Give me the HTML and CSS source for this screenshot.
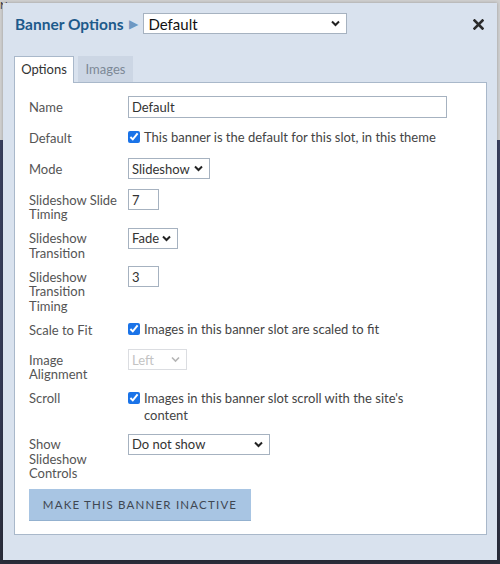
FILE: index.html
```html
<!DOCTYPE html>
<html>
<head>
<meta charset="utf-8">
<link rel="stylesheet" href="styles.css">
</head>
<body>
<div class="page">
  <div class="page-head"><span class="page-letter">N</span></div>
  <div class="page-body"></div>
</div>
<div class="dialog">
  <div class="dlg-head">
    <div class="dlg-title">
      <span class="title-text">Banner Options</span>
      <span class="title-arrow">&#9654;</span>
      <span class="sel-wrap">
        <select class="sel sel-title"><option>Default</option></select>
        <svg class="chev" width="9" height="7" viewBox="0 0 9 7"><path d="M1 1.5 L4.5 5 L8 1.5" fill="none" stroke="#222" stroke-width="2"/></svg>
      </span>
    </div>
    <svg class="close" width="11" height="11" viewBox="0 0 11 11"><path d="M1.5 1.5 L9.5 9.5 M9.5 1.5 L1.5 9.5" stroke="#2b2b2b" stroke-width="2.6" stroke-linecap="square"/></svg>
  </div>
  <div class="tabs">
    <div class="tab tab-active">Options</div>
    <div class="tab">Images</div>
  </div>
  <div class="panel">
    <div class="row">
      <div class="lbl">Name</div>
      <input class="txt txt-wide" type="text" value="Default">
    </div>
    <div class="row">
      <div class="lbl">Default</div>
      <label class="chk"><input type="checkbox" checked><span>This banner is the default for this slot, in this theme</span></label>
    </div>
    <div class="row">
      <div class="lbl">Mode</div>
      <span class="sel-wrap">
        <select class="sel sel-mode"><option>Slideshow</option></select>
        <svg class="chev" width="9" height="7" viewBox="0 0 9 7"><path d="M1 1.5 L4.5 5 L8 1.5" fill="none" stroke="#222" stroke-width="2"/></svg>
      </span>
    </div>
    <div class="row">
      <div class="lbl">Slideshow Slide Timing</div>
      <input class="txt txt-num" type="text" value="7">
    </div>
    <div class="row">
      <div class="lbl">Slideshow Transition</div>
      <span class="sel-wrap">
        <select class="sel sel-trans"><option>Fade</option></select>
        <svg class="chev" width="9" height="7" viewBox="0 0 9 7"><path d="M1 1.5 L4.5 5 L8 1.5" fill="none" stroke="#222" stroke-width="2"/></svg>
      </span>
    </div>
    <div class="row">
      <div class="lbl">Slideshow Transition Timing</div>
      <input class="txt txt-num" type="text" value="3">
    </div>
    <div class="row row-tight">
      <div class="lbl">Scale to Fit</div>
      <label class="chk"><input type="checkbox" checked><span>Images in this banner slot are scaled to fit</span></label>
    </div>
    <div class="row">
      <div class="lbl">Image Alignment</div>
      <span class="sel-wrap">
        <select class="sel sel-align" disabled><option>Left</option></select>
        <svg class="chev" width="9" height="7" viewBox="0 0 9 7"><path d="M1 1.5 L4.5 5 L8 1.5" fill="none" stroke="#b5b5b5" stroke-width="1.6"/></svg>
      </span>
    </div>
    <div class="row">
      <div class="lbl">Scroll</div>
      <label class="chk"><input type="checkbox" checked><span>Images in this banner slot scroll with the site's content</span></label>
    </div>
    <div class="row">
      <div class="lbl">Show Slideshow Controls</div>
      <span class="sel-wrap">
        <select class="sel sel-show"><option>Do not show</option></select>
        <svg class="chev" width="9" height="7" viewBox="0 0 9 7"><path d="M1 1.5 L4.5 5 L8 1.5" fill="none" stroke="#222" stroke-width="2"/></svg>
      </span>
    </div>
    <button class="btn">MAKE THIS BANNER INACTIVE</button>
  </div>
</div>
</body>
</html>
```
FILE: styles.css
```css
* { box-sizing: border-box; }
html, body { margin: 0; padding: 0; }
body {
  width: 500px;
  height: 564px;
  overflow: hidden;
  font-family: Lato, "Noto Sans", sans-serif;
  position: relative;
  background: #3a4160;
}
.page { display: flex; flex-direction: column; height: 564px; }
.page-head { height: 140px; background: #cfcfcf; }
.page-letter { font-size: 10px; color: #333; line-height: 10px; display: block; }
.page-body { flex: 1; background: linear-gradient(180deg, #3a4160 0%, #343a56 60%, #2a2d3a 100%); }

.dialog {
  position: absolute;
  left: 3px;
  top: 3px;
  width: 494px;
  height: 557px;
  background: #d9e2ee;
  padding: 10px 10px 0 11px;
  box-shadow: 0 0 3px rgba(0,0,0,0.25);
}
.dlg-head {
  display: flex;
  align-items: center;
  justify-content: space-between;
  height: 21px;
  padding-left: 1px;
}
.dlg-title { display: flex; align-items: center; }
.title-text { font-weight: 700; font-size: 15.5px; color: #1d5a8b; }
.title-arrow { color: #6e98c2; font-size: 12px; margin: 0 5px 0 6px; }
.close { margin-right: 3px; margin-top: 2px; }

.sel-wrap { position: relative; display: inline-block; }
.sel {
  appearance: none;
  -webkit-appearance: none;
  border: 1px solid #a6b2c0;
  border-radius: 0;
  background: #fff;
  font-family: Lato, "Noto Sans", sans-serif;
  font-size: 13px;
  color: #333;
  height: 21px;
  padding: 0 0 0 3px;
  margin: 0;
  display: block;
  outline: none;
}
.chev { position: absolute; right: 7px; top: 7px; pointer-events: none; }
.sel-title { width: 204px; font-size: 15px; color: #111; height: 21px; padding-left: 4px; }
.sel-mode { width: 82px; }
.sel-trans { width: 50px; }
.sel-align { width: 59px; color: #aaa; border-color: #ccd0d5; }
.sel-show { width: 142px; }

.tabs { display: flex; gap: 4px; margin-top: 22px; }
.tab {
  height: 26px;
  width: 55px;
  text-align: center;
  font-size: 13px;
  line-height: 26px;
  color: #7c8896;
  background: #ccd6e4;
}
.tab-active {
  height: 27px;
  width: 60px;
  color: #333;
  background: #fff;
  border: 1px solid #a9b8ca;
  border-bottom: none;
  line-height: 25px;
  position: relative;
  z-index: 1;
  margin-bottom: -1px;
}

.panel {
  background: #fff;
  border: 1px solid #a9b8ca;
  height: 453px;
  padding: 13px 14px 0 14px;
}
.row { display: flex; align-items: flex-start; margin-bottom: 6px; min-height: 25px; }
.row-tight { min-height: 24px; }
.lbl {
  width: 99px;
  flex: none;
  padding-top: 3.5px;
  padding-right: 8px;
  font-size: 13px;
  line-height: 14.5px;
  color: #555;
}
.txt {
  border: 1px solid #a6b2c0;
  border-radius: 0;
  font-family: Lato, "Noto Sans", sans-serif;
  font-size: 13px;
  color: #333;
  padding: 0 3px;
  height: 22px;
  margin: 0;
  outline: none;
}
.txt-wide { width: 319px; }
.txt-num { width: 31px; height: 21px; }

.chk {
  display: flex;
  align-items: flex-start;
  font-size: 13px;
  line-height: 17px;
  color: #444;
  padding: 2px 0 4px 0;
  width: 310px;
}
.chk input {
  width: 12px;
  height: 12px;
  margin: 2px 4px 0 0;
  accent-color: #1a73e8;
  flex: none;
}
.btn {
  display: block;
  width: 222px;
  height: 32px;
  margin-top: 8px;
  background: #a8c5e3;
  border: none;
  border-bottom: 1px solid #93b1cf;
  font-family: Lato, "Noto Sans", sans-serif;
  font-size: 11.5px;
  letter-spacing: 1.2px;
  color: #3f4752;
  padding: 0;
}
```
